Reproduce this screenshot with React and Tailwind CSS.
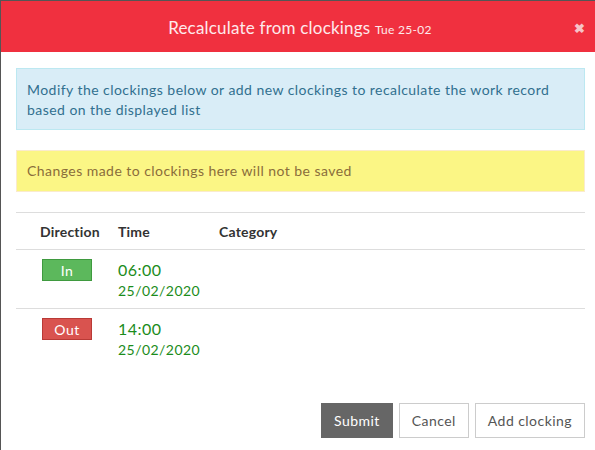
import React from 'react'

const rows = [
  { dir: 'In', time: '06:00', date: '25/02/2020' },
  { dir: 'Out', time: '14:00', date: '25/02/2020' },
]

export default function App() {
  return (
    <div className="w-[595px] h-[450px] bg-[#555] pl-px pt-px overflow-hidden" style={{ fontFamily: 'Lato, "Open Sans", sans-serif' }}>
      <div className="bg-white h-full w-[594px]">
        <div className="h-[51px] bg-[#f0303f] flex items-center relative">
          <div className="flex-1 text-center text-white/90 text-[17px] tracking-[0.2px] pt-[2px] pl-[4px]">
            Recalculate from clockings <span className="text-[12px] tracking-[0.3px]">Tue 25-02</span>
          </div>
          <span className="absolute right-[10px] top-[18px] text-[13px] text-[#f6c4c8] font-bold">✖</span>
        </div>

        <div className="pl-[15px] pr-[10px] pt-[16px] tracking-[0.45px]">
          <div className="bg-[#d9edf7] border border-[#bce8f1] text-[#31708f] text-[14px] leading-[20px] px-[10px] pt-[11px] pb-[9px]">
            Modify the clockings below or add new clockings to recalculate the work record based on the displayed list
          </div>
          <div className="mt-[20px] bg-[#fbf685] border border-[#faebcc] text-[#8a6d3b] text-[14px] leading-[20px] px-[10px] py-[10px]">
            Changes made to clockings here will not be saved
          </div>

          <div className="mt-[20px] border-t border-[#ddd]">
            <div className="flex h-[37px] items-center border-b border-[#ddd] text-[14px] font-bold text-[#333] tracking-[0.2px]">
              <div className="w-[102px] pl-[24px]">Direction</div>
              <div className="w-[101px]">Time</div>
              <div>Category</div>
            </div>
            {rows.map(r => (
              <div key={r.dir} className="flex h-[59px] border-b border-[#ddd] last:border-b-0 pt-[9px]">
                <div className="w-[102px] pl-[26px]">
                  <div className={`w-[50px] h-[22px] flex items-center justify-center text-white text-[14px] border ${r.dir === 'In' ? 'bg-[#5cb85c] border-[#3f9a3f]' : 'bg-[#d9534f] border-[#b93a36]'}`}>
                    {r.dir}
                  </div>
                </div>
                <div className="text-[#1b8c1b]">
                  <div className="text-[16px] leading-[22px]">{r.time}</div>
                  <div className="text-[14px] leading-[20px]">{r.date}</div>
                </div>
              </div>
            ))}
          </div>

          <div className="flex justify-end gap-[6px] mt-[35px] text-[14px]">
            <button className="h-[35px] px-[12px] bg-[#666] text-white border border-[#666]">Submit</button>
            <button className="h-[35px] px-[12px] bg-white text-[#555] border border-[#ccc]">Cancel</button>
            <button className="h-[35px] px-[12px] bg-white text-[#555] border border-[#ccc]">Add clocking</button>
          </div>
        </div>
      </div>
    </div>
  )
}
